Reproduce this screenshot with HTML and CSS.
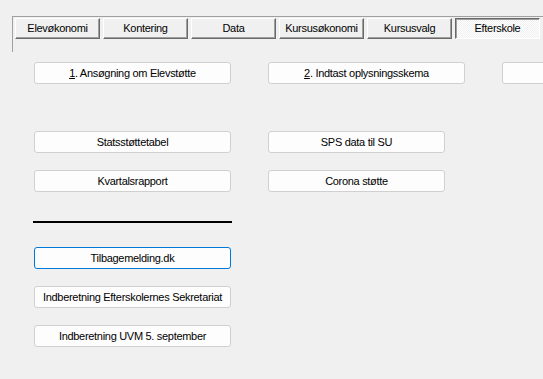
FILE: index.html
```html
<!DOCTYPE html>
<html lang="da">
<head>
    <meta charset="UTF-8">
    <title>Efterskole</title>
    <link rel="stylesheet" href="styles.css">
</head>
<body>
    <div class="tabstrip">
        <div class="tab">Elevøkonomi</div>
        <div class="tab">Kontering</div>
        <div class="tab">Data</div>
        <div class="tab">Kursusøkonomi</div>
        <div class="tab">Kursusvalg</div>
        <div class="tab selected">Efterskole</div>
    </div>

    <div class="page">
        <div class="row first">
            <button class="btn wide"><u>1</u>. Ansøgning om Elevstøtte</button>
            <button class="btn wide"><u>2</u>. Indtast oplysningsskema</button>
            <button class="btn wide"></button>
        </div>

        <div class="row">
            <button class="btn wide">Statsstøttetabel</button>
            <button class="btn narrow">SPS data til SU</button>
        </div>
        <div class="row">
            <button class="btn wide">Kvartalsrapport</button>
            <button class="btn narrow">Corona støtte</button>
        </div>

        <div class="divider"></div>

        <div class="row">
            <button class="btn wide focus">Tilbagemelding.dk</button>
        </div>
        <div class="row">
            <button class="btn wide">Indberetning Efterskolernes Sekretariat</button>
        </div>
        <div class="row">
            <button class="btn wide">Indberetning UVM 5. september</button>
        </div>
    </div>
</body>
</html>
```

FILE: styles.css
```css
html, body {
    overflow: hidden;
}
body {
    margin: 0;
    background-color: #f0f0f0;
    font-family: "Liberation Sans", Arial, sans-serif;
    font-size: 11px;
    color: #000;
}
.tabstrip {
    display: flex;
    gap: 3px;
    margin: 16px 0 0 12px;
    padding: 1px 0 0 2px;
    height: 34px;
    border-top: 1px solid #a0a0a0;
    border-left: 1px solid #a0a0a0;
    overflow: hidden;
}
.tab {
    box-sizing: border-box;
    width: 85px;
    height: 21px;
    line-height: 18px;
    text-align: center;
    letter-spacing: -0.3px;
    flex-shrink: 0;
    background-color: #f0f0f0;
    border-top: 1px solid #fff;
    border-left: 1px solid #fff;
    border-right: 1px solid #696969;
    border-bottom: 1px solid #696969;
    box-shadow: inset -1px -1px 0 #a0a0a0;
}
.tab.selected {
    border-top: 1px solid #696969;
    border-left: 1px solid #696969;
    border-right: 1px solid #fff;
    border-bottom: 1px solid #fff;
    box-shadow: inset 1px 1px 0 #a0a0a0;
    background-color: #fff;
    background-image: linear-gradient(45deg, #f0f0f0 25%, transparent 25%, transparent 75%, #f0f0f0 75%),
        linear-gradient(45deg, #f0f0f0 25%, transparent 25%, transparent 75%, #f0f0f0 75%);
    background-size: 2px 2px;
    background-position: 0 0, 1px 1px;
}
.page {
    padding: 10px 0 0 34px;
}
.row {
    display: flex;
    gap: 37px;
    margin-bottom: 17px;
    overflow: hidden;
}
.row.first {
    margin-bottom: 47px;
}
.btn {
    box-sizing: border-box;
    height: 22px;
    flex-shrink: 0;
    padding: 0;
    font-family: inherit;
    font-size: 11px;
    letter-spacing: -0.3px;
    color: #000;
    background-color: #fdfdfd;
    border: 1px solid #d0d0d0;
    border-radius: 3px;
    text-align: center;
}
.btn.wide {
    width: 197px;
}
.btn.narrow {
    width: 177px;
}
.btn.focus {
    border-color: #0078d7;
}
.divider {
    width: 199px;
    height: 2px;
    margin: 29px 0 24px -1px;
    background-color: #000;
}
```
